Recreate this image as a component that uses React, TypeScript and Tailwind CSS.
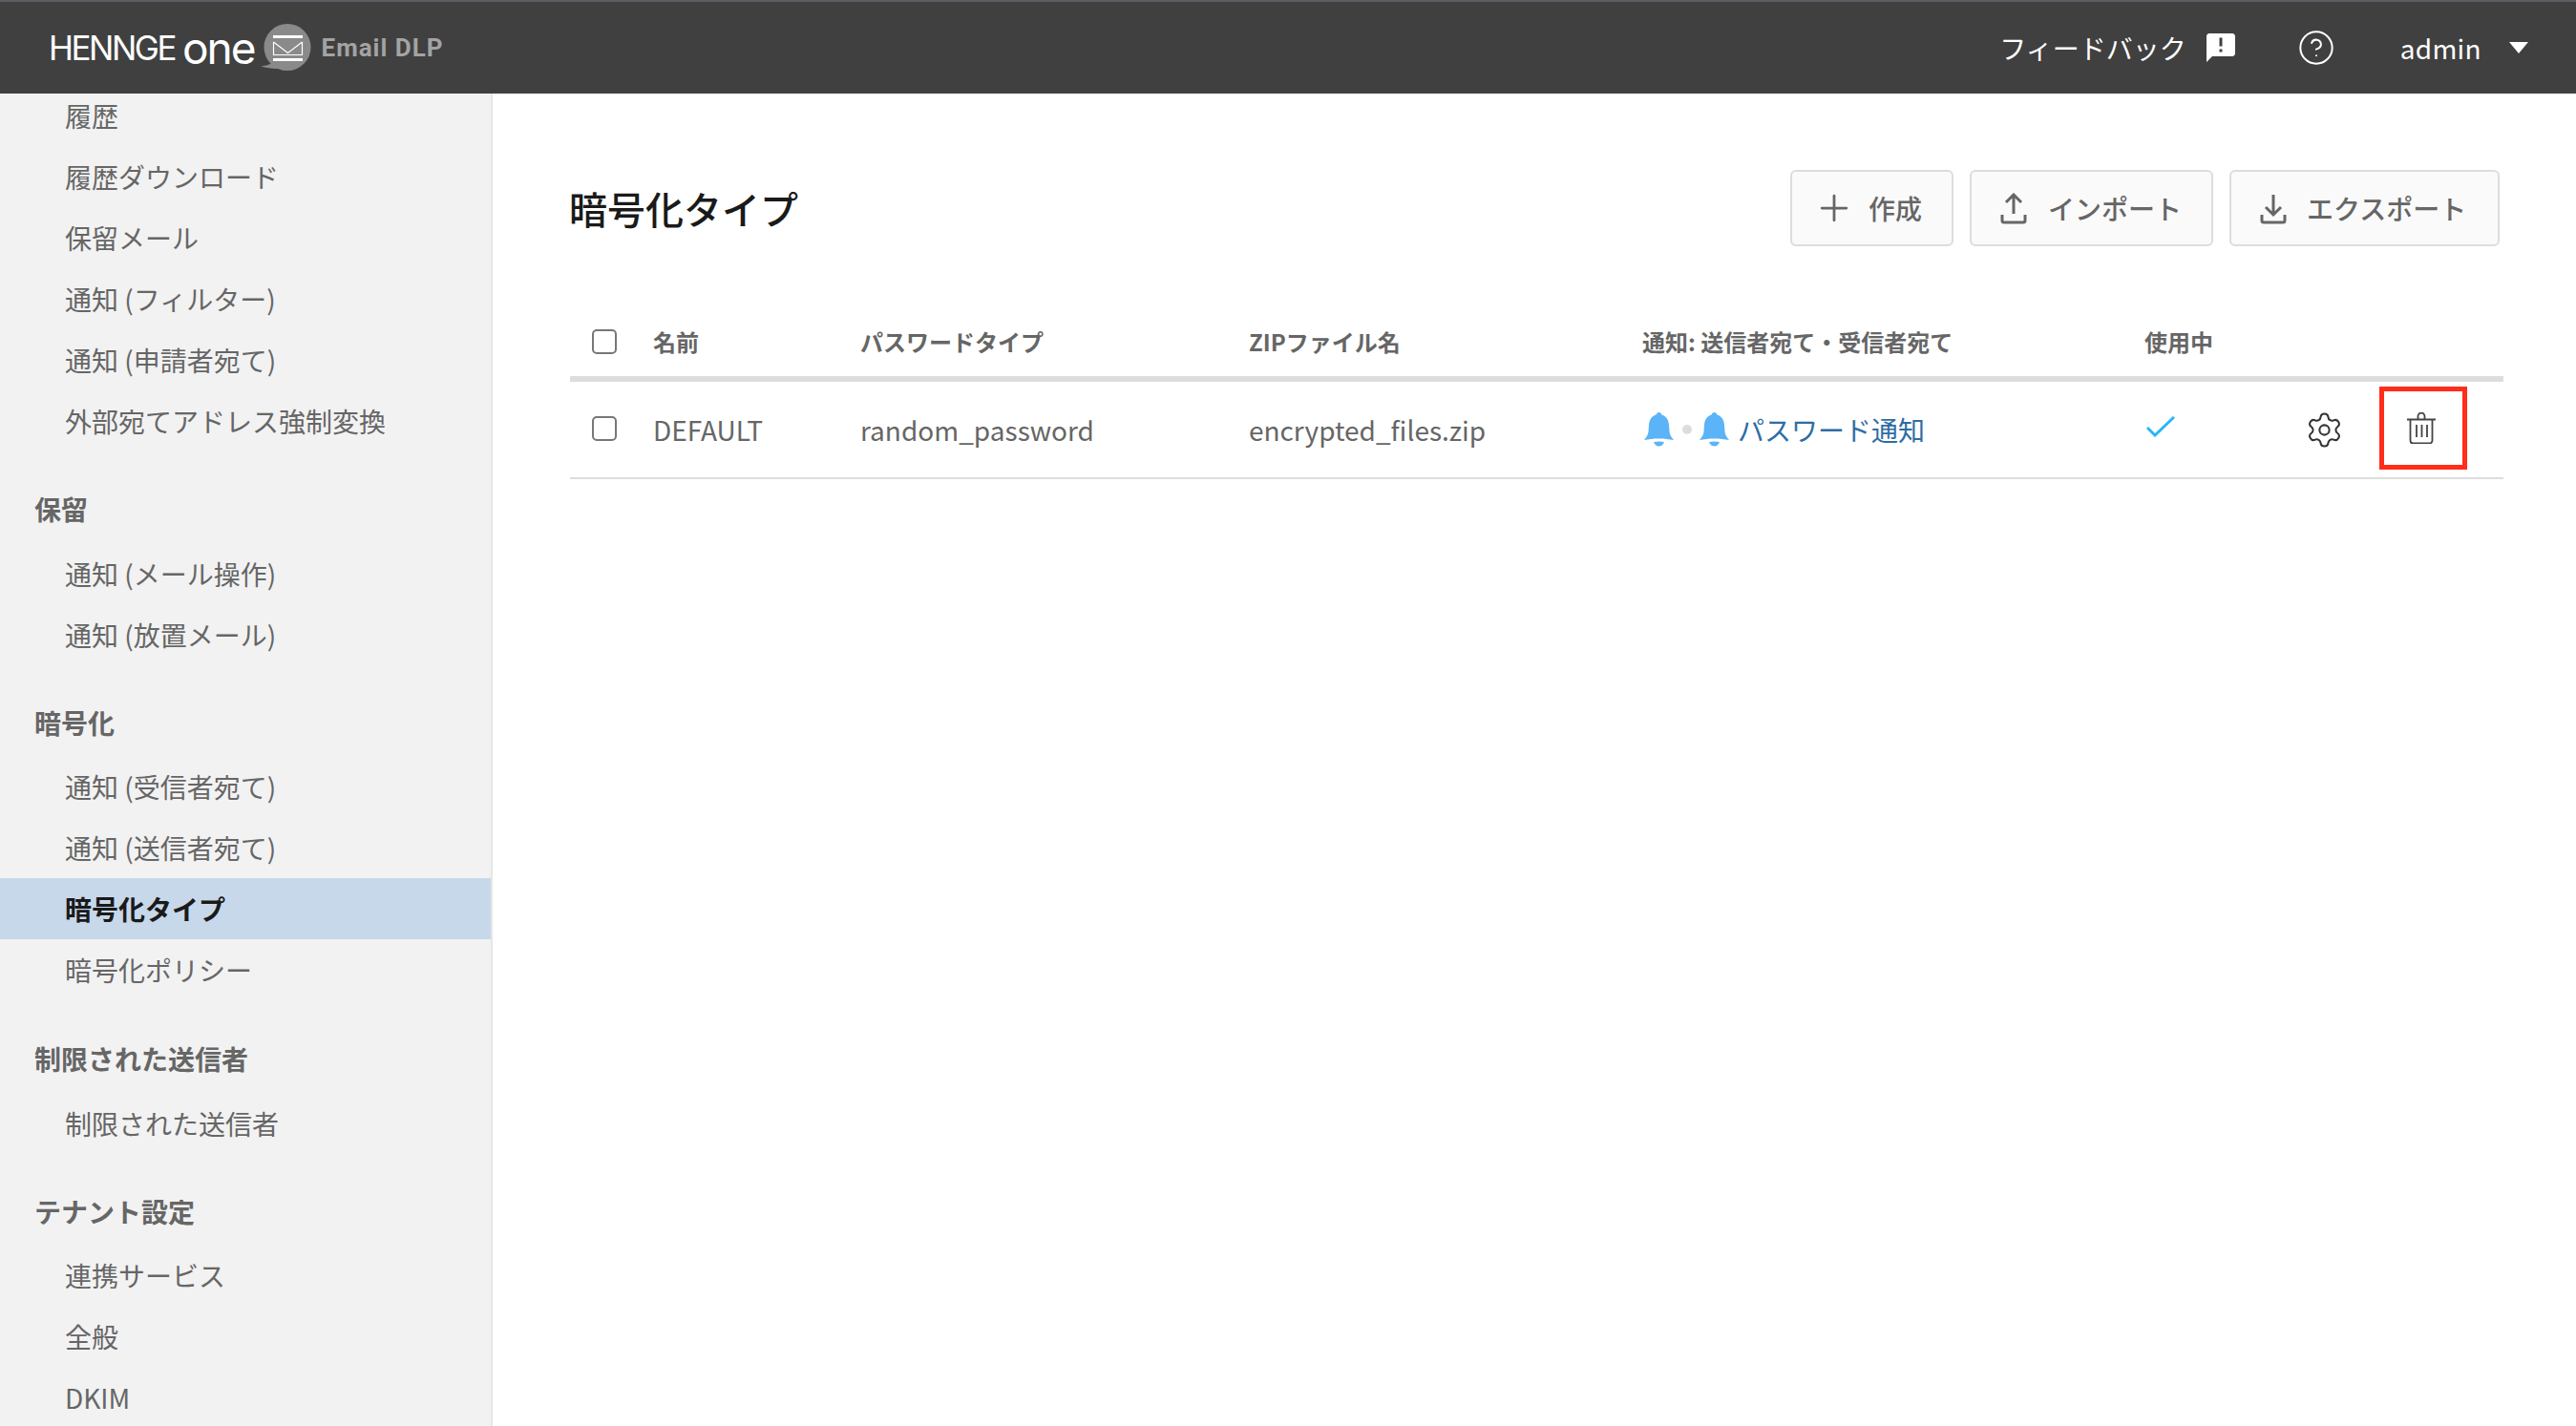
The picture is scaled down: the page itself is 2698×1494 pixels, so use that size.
import { CircleHelp, Settings, Plus } from "lucide-react";

function Item({ label, active }: { label: string; active?: boolean }) {
  return (
    <div
      className={
        active
          ? "flex h-16 items-center bg-[#c7d8eb] pl-[68px] text-[28px] font-bold text-[#1a1a1a]"
          : "flex h-16 items-center pl-[68px] text-[28px] text-[#666666]"
      }
    >
      {label}
    </div>
  );
}

function Heading({ label, className }: { label: string; className: string }) {
  return (
    <div className={"flex h-14 items-center pl-9 text-[28px] font-bold text-[#666666] " + className}>{label}</div>
  );
}

function Bell() {
  return (
    <svg viewBox="0 0 31 36" className="h-9 w-[31px] fill-[#5ab4f7]">
      <path d="M15.500 0c1.500 0 2.500.9 2.800 2.500 4.700 1.300 7.300 5.500 7.700 10.500l.5 7c.3 3.500 2 6 4.500 9-5-.8-10-1.500-15.500-1.500S5 28.200 0 29c2.500-3 4.200-5.500 4.500-9l.5-7c.4-5 3-9.200 7.700-10.500C13 .9 14 0 15.500 0z" />
      <path d="M10 31c3.500-.8 7.500-.8 11 0-1.200 3-3 4.500-5.500 4.500S11.200 34 10 31z" />
    </svg>
  );
}

function Button({ icon, label, className }: { icon: React.ReactNode; label: string; className: string }) {
  return (
    <div
      className={
        "flex h-20 items-center rounded-md border-2 border-[#dddddd] bg-[#fafafa] text-[28px] font-medium text-[#666666] " +
        className
      }
    >
      {icon}
      <span>{label}</span>
    </div>
  );
}

export default function App() {
  return (
    <div className="flex h-[1494px] w-[2698px] flex-col overflow-hidden bg-white font-['Noto_Sans_CJK_JP','Noto_Sans',sans-serif]">
      <header className="flex h-[98px] shrink-0 items-center border-t-2 border-[#5c5c62] bg-[#404040] pl-[51px] text-white">
        <div className="flex items-center">
          <span className="font-['Inter',sans-serif] text-[35px] leading-none font-normal tracking-[-2.5px]">HENNGE</span>
          <span className="ml-[8px] font-['Inter',sans-serif] text-[46px] leading-none font-normal tracking-[-2px]">one</span>
          <svg viewBox="0 0 54 50" className="ml-[5px] h-[50px] w-[54px]">
            <circle cx="29" cy="24.500" r="24.500" fill="#8a8a8a" />
            <path d="M14 40C12 42 7 44 1 44.500 8 46.500 15 47 22 47z" fill="#8a8a8a" />
            <rect x="14" y="12" width="31" height="3" fill="#fff" />
            <rect x="14" y="36" width="31" height="3" fill="#fff" />
            <path d="M14.500 19v13.500h30V19M14.500 19l15 11.500L44.500 19" fill="none" stroke="#fff" strokeWidth="1.200" />
          </svg>
          <span className="ml-[11px] font-['Roboto',sans-serif] text-[26px] font-bold tracking-[1px] text-[#a3a3a3]">Email DLP</span>
        </div>
        <div className="ml-auto flex items-center pr-[50px]">
          <span className="text-[28px]">フィードバック</span>
          <svg viewBox="2 2 20 20" className="ml-[21px] h-[30px] w-[30px] fill-white">
            <path d="M20 2H4c-1.100 0-1.990.9-1.990 2L2 22l4-4h14c1.100 0 2-.9 2-2V4c0-1.100-.9-2-2-2zm-7 9h-2V5h2v6zm0 4h-2v-2h2v2z" />
          </svg>
          <CircleHelp className="ml-[65px] h-10 w-10" strokeWidth={1.2} />
          <span className="ml-[68px] text-[28px] tracking-[0.3px]">admin</span>
          <svg viewBox="0 0 20 12" className="ml-[29px] h-3 w-5 fill-white">
            <path d="M0 0h20L10 12z" />
          </svg>
        </div>
      </header>

      <div className="flex min-h-0 flex-1">
        <aside className="w-[516px] shrink-0 overflow-hidden border-r-[2px] border-[#e6e6e6] bg-[#f2f2f2]">
          <div className="-mt-[9px]">
            <Item label="履歴" />
            <Item label="履歴ダウンロード" />
            <Item label="保留メール" />
            <Item label="通知 (フィルター)" />
            <Item label="通知 (申請者宛て)" />
            <Item label="外部宛てアドレス強制変換" />
            <Heading label="保留" className="mt-8 mb-2" />
            <Item label="通知 (メール操作)" />
            <Item label="通知 (放置メール)" />
            <Heading label="暗号化" className="mt-8 mb-[7px]" />
            <Item label="通知 (受信者宛て)" />
            <Item label="通知 (送信者宛て)" />
            <Item label="暗号化タイプ" active />
            <Item label="暗号化ポリシー" />
            <Heading label="制限された送信者" className="mt-[33px] mb-2" />
            <Item label="制限された送信者" />
            <Heading label="テナント設定" className="mt-8 mb-[7px]" />
            <Item label="連携サービス" />
            <Item label="全般" />
            <Item label="DKIM" />
          </div>
        </aside>

        <main className="flex-1 pt-20 pr-[76px] pl-[81px]">
          <div className="flex items-center justify-between pr-1">
            <h1 className="-ml-px text-[40px] font-medium text-[#1a1a1a]">暗号化タイプ</h1>
            <div className="flex gap-[17px]">
              <Button
                className="w-[171px] pl-[22px]"
                label="作成"
                icon={<Plus className="mr-[14px] h-11 w-11" strokeWidth={1.5} />}
              />
              <Button
                className="w-[255px] pl-[30px]"
                label="インポート"
                icon={
                  <svg viewBox="0 0 28 33" className="mr-[22px] h-[33px] w-7 fill-none stroke-[#666666] stroke-[3]">
                    <path d="M14 2v20M6 10l8-8 8 8M2 23v6a2 2 0 0 0 2 2h20a2 2 0 0 0 2-2v-6" />
                  </svg>
                }
              />
              <Button
                className="w-[283px] pl-[30px]"
                label="エクスポート"
                icon={
                  <svg viewBox="0 0 28 33" className="mr-[21px] h-[33px] w-7 fill-none stroke-[#666666] stroke-[3]">
                    <path d="M14 2v21M6 15l8 8 8-8M2 23v6a2 2 0 0 0 2 2h20a2 2 0 0 0 2-2v-6" />
                  </svg>
                }
              />
            </div>
          </div>

          <div className="mt-[64px] grid h-[78px] grid-cols-[87px_217px_407px_412px_526px_1fr] items-center border-b-[6px] border-[#dddddd] text-2xl font-bold text-[#666666]">
            <div className="pl-[23px]">
              <div className="h-[26px] w-[26px] rounded-[5px] border-2 border-[#777777]" />
            </div>
            <div>名前</div>
            <div>パスワードタイプ</div>
            <div>ZIPファイル名</div>
            <div>通知: 送信者宛て・受信者宛て</div>
            <div>使用中</div>
          </div>

          <div className="relative grid h-[102px] grid-cols-[87px_217px_407px_412px_526px_1fr] items-center border-b-2 border-[#dddddd] text-[28px] text-[#666666]">
            <div className="pl-[23px]">
              <div className="mb-[2px] h-[26px] w-[26px] rounded-[5px] border-2 border-[#777777]" />
            </div>
            <div>DEFAULT</div>
            <div>random_password</div>
            <div>encrypted_files.zip</div>
            <div className="ml-[2px] flex items-center">
              <Bell />
              <span className="mr-2 ml-[9px] h-[10px] w-[10px] rounded-full bg-[#dddddd]" />
              <Bell />
              <span className="ml-[9px] text-[#2e6da4]">パスワード通知</span>
            </div>
            <div className="flex items-center pl-[2px]">
              <svg viewBox="0 0 30 22" className="mb-[7px] h-[22px] w-[30px] fill-none stroke-[#29b6f6] stroke-[3]">
                <path d="M1 12l8 8L29 1" />
              </svg>
              <Settings className="ml-[136px] h-[41px] w-[41px] text-[#333333]" strokeWidth={1.2} />
              <svg viewBox="0 0 30 33" className="mb-1 ml-[66px] h-[33px] w-[30px] fill-none stroke-[#444444] stroke-[1.800]">
                <path d="M0 7.500h30M11.500 7V4a3.500 3.500 0 0 1 7 0v3M3.500 7.500v22a3 3 0 0 0 3 3h17a3 3 0 0 0 3-3v-22M10 13v13M15.500 13v13M21 13v13" />
              </svg>
            </div>
            <div className="absolute top-[5px] left-[1895px] h-[87px] w-[92px] border-[5px] border-[#ff2d1a]" />
          </div>
        </main>
      </div>
    </div>
  );
}
